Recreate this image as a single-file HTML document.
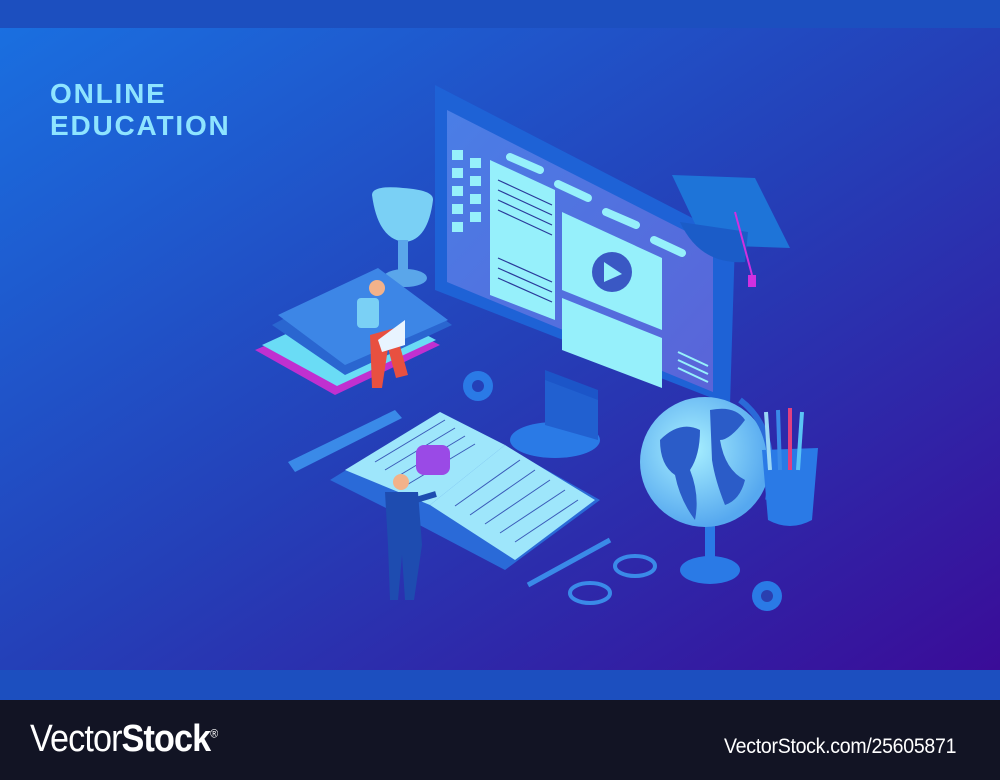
<!DOCTYPE html>
<html><head><style>
html,body{margin:0;padding:0;width:1000px;height:780px;overflow:hidden;background:#12131f}
.wrap{position:relative;width:1000px;height:780px}
.t{position:absolute;font-family:"Liberation Sans",sans-serif;}
</style></head><body><div class="wrap">
<svg width="1000" height="780" viewBox="0 0 1000 780" style="position:absolute;left:0;top:0">
<defs>
<linearGradient id="bg" x1="0" y1="0" x2="1" y2="1">
<stop offset="0" stop-color="#1a6fe0"/><stop offset="0.5" stop-color="#2440b8"/><stop offset="1" stop-color="#3a0c98"/>
</linearGradient>
<linearGradient id="scr" x1="0" y1="0" x2="1" y2="1"><stop offset="0" stop-color="#4a7ee6"/><stop offset="1" stop-color="#5a64d8"/></linearGradient>
<radialGradient id="gl" cx="0.4" cy="0.4" r="0.6"><stop offset="0" stop-color="#a8f0ff"/><stop offset="1" stop-color="#56a8ef"/></radialGradient>
</defs>
<rect x="0" y="0" width="1000" height="28" fill="#1c4fbf"/>
<rect x="0" y="28" width="1000" height="642" fill="url(#bg)"/>
<rect x="0" y="670" width="1000" height="30" fill="#1c4fbf"/>
<rect x="0" y="700" width="1000" height="80" fill="#121424"/>
<!-- monitor stand -->
<polygon points="545,370 598,390 598,440 545,420" fill="#1c55c8"/>
<ellipse cx="555" cy="440" rx="45" ry="18" fill="#2a7ae6"/>
<polygon points="545,380 598,400 598,440 545,425" fill="#2160d0"/>
<!-- monitor -->
<polygon points="435,85 735,240 730,405 435,290" fill="#1e62d6"/>
<polygon points="447,110 713,245 713,392 447,282" fill="url(#scr)"/>
<polygon points="490,160 555,190 555,320 490,295" fill="#96f0fb"/>
<polygon points="562,212 662,258 662,330 562,290" fill="#96f0fb"/>
<polygon points="562,298 662,338 662,388 562,350" fill="#96f0fb"/>
<circle cx="612" cy="272" r="20" fill="#3a58c4"/>
<polygon points="604,262 604,282 622,274" fill="#96f0fb"/>
<g fill="#96f0fb">
<rect x="452" y="150" width="11" height="10"/><rect x="470" y="158" width="11" height="10"/>
<rect x="452" y="168" width="11" height="10"/><rect x="470" y="176" width="11" height="10"/>
<rect x="452" y="186" width="11" height="10"/><rect x="470" y="194" width="11" height="10"/>
<rect x="452" y="204" width="11" height="10"/><rect x="470" y="212" width="11" height="10"/>
<rect x="452" y="222" width="11" height="10"/>
</g>
<g stroke="#96f0fb" stroke-width="8" stroke-linecap="round">
<line x1="510" y1="157" x2="540" y2="170"/><line x1="558" y1="184" x2="588" y2="198"/>
<line x1="606" y1="212" x2="636" y2="225"/><line x1="654" y1="240" x2="682" y2="253"/>
</g>
<g stroke="#2a3a9a" stroke-width="1.2">
<line x1="498" y1="180" x2="552" y2="205"/><line x1="498" y1="190" x2="552" y2="215"/>
<line x1="498" y1="200" x2="552" y2="225"/><line x1="498" y1="210" x2="552" y2="235"/>
<line x1="498" y1="258" x2="552" y2="282"/><line x1="498" y1="268" x2="552" y2="292"/>
<line x1="498" y1="278" x2="552" y2="302"/>
</g>
<g stroke="#96f0fb" stroke-width="2"><line x1="678" y1="352" x2="708" y2="366"/><line x1="678" y1="360" x2="708" y2="374"/><line x1="678" y1="368" x2="708" y2="382"/></g>
<!-- cap -->
<polygon points="672,175 755,178 790,248 705,245" fill="#1e74d8"/>
<path d="M680,222 Q700,265 745,262 L748,232 Z" fill="#1b5cc8"/>
<line x1="735" y1="212" x2="752" y2="275" stroke="#d030e0" stroke-width="2"/>
<rect x="748" y="275" width="8" height="12" fill="#d030e0"/>
<!-- trophy -->
<path d="M372,195 Q372,185 403,188 Q434,190 433,200 Q428,240 405,242 Q378,240 372,195Z" fill="#7ad0f5"/>
<rect x="398" y="240" width="10" height="30" fill="#5aa6ea"/>
<ellipse cx="405" cy="278" rx="22" ry="9" fill="#5aa6ea"/>
<!-- books -->
<polygon points="255,350 360,305 440,345 335,395" fill="#c030d0"/>
<polygon points="262,345 360,300 436,340 337,386" fill="#6adcf5"/>
<polygon points="272,325 375,270 452,325 345,375" fill="#2a66d0"/>
<polygon points="278,315 378,268 448,320 345,365" fill="#3d86e6"/>
<!-- man on books -->
<circle cx="377" cy="288" r="8" fill="#f2b28a"/>
<rect x="357" y="298" width="22" height="30" rx="4" fill="#7ad0f5"/>
<polygon points="370,335 395,328 408,375 396,378 388,348 382,388 372,388" fill="#e85040"/>
<polygon points="378,340 405,320 405,345 382,352" fill="#e8f4ff"/>
<!-- gear -->
<circle cx="478" cy="386" r="15" fill="#2a7ae6"/><circle cx="478" cy="386" r="6" fill="#2440b8"/>
<circle cx="767" cy="596" r="15" fill="#2a7ae6"/><circle cx="767" cy="596" r="6" fill="#2a40b0"/>
<!-- ruler -->
<polygon points="288,462 395,410 402,418 295,472" fill="#3a8ae8"/>
<!-- open book -->
<polygon points="330,480 440,412 520,455 600,500 505,570 410,520" fill="#2a6ad8"/>
<polygon points="345,470 440,412 505,445 430,505" fill="#9ee6fb"/>
<polygon points="430,505 505,445 595,500 515,560" fill="#9ee6fb"/>
<g stroke="#3a5ab8" stroke-width="1">
<line x1="375" y1="462" x2="445" y2="420"/><line x1="385" y1="470" x2="455" y2="428"/><line x1="395" y1="478" x2="465" y2="436"/><line x1="405" y1="486" x2="475" y2="444"/>
<line x1="455" y1="506" x2="520" y2="460"/><line x1="470" y1="515" x2="535" y2="470"/><line x1="485" y1="524" x2="550" y2="480"/><line x1="500" y1="533" x2="565" y2="490"/><line x1="515" y1="542" x2="578" y2="500"/>
</g>
<rect x="416" y="445" width="34" height="30" rx="8" fill="#9a4ae6"/>
<!-- man standing -->
<circle cx="401" cy="482" r="8" fill="#f2b28a"/>
<path d="M385,492 L418,492 L422,545 L414,600 L405,600 L402,555 L398,600 L390,600 L388,545 Z" fill="#1e4cb0"/>
<line x1="416" y1="500" x2="436" y2="494" stroke="#1e4cb0" stroke-width="6"/>
<!-- pencil, glasses -->
<line x1="528" y1="585" x2="610" y2="540" stroke="#3a8ae8" stroke-width="5"/>
<ellipse cx="590" cy="593" rx="20" ry="10" fill="none" stroke="#3a8ae8" stroke-width="4"/>
<ellipse cx="635" cy="566" rx="20" ry="10" fill="none" stroke="#3a8ae8" stroke-width="4"/>
<!-- globe -->
<ellipse cx="710" cy="570" rx="30" ry="14" fill="#2a7ae6"/>
<rect x="705" y="525" width="10" height="45" fill="#2a7ae6"/>
<circle cx="705" cy="462" r="65" fill="url(#gl)"/>
<path d="M660,440 Q680,420 700,430 Q700,455 690,470 Q700,495 695,520 Q680,500 675,475 Q660,465 660,440Z" fill="#2b5cc8"/>
<path d="M710,410 Q735,405 745,420 Q730,440 720,440 Q725,470 745,480 Q740,500 725,505 Q715,480 712,460 Z" fill="#2b5cc8"/>
<path d="M740,400 Q780,430 768,500" fill="none" stroke="#2a6ad8" stroke-width="6"/>
<!-- pencil cup -->
<path d="M762,450 L818,448 L812,520 Q790,532 768,520Z" fill="#2a7ae6"/>
<line x1="778" y1="410" x2="780" y2="470" stroke="#3a8ae8" stroke-width="4"/>
<line x1="790" y1="408" x2="790" y2="470" stroke="#e04080" stroke-width="4"/>
<line x1="802" y1="412" x2="798" y2="470" stroke="#5ac4f5" stroke-width="4"/>
<line x1="766" y1="412" x2="770" y2="470" stroke="#9ad6f5" stroke-width="4"/>
</svg>
<div class="t" style="left:50px;top:78px;color:#8ee4ff;font-weight:bold;font-size:28px;line-height:32px;letter-spacing:1.8px">ONLINE<br>EDUCATION</div>
<div class="t" style="left:30px;top:718px;color:#fff;font-size:38px;letter-spacing:-1px;transform:scaleX(0.9);transform-origin:left"><span style="font-weight:300">Vector</span><b>Stock</b><sup style="font-size:12px">®</sup></div>
<div class="t" style="left:724px;top:735px;color:#fff;font-size:21px;letter-spacing:-0.3px;transform:scaleX(0.93);transform-origin:left">VectorStock.com/25605871</div>
</div></body></html>
